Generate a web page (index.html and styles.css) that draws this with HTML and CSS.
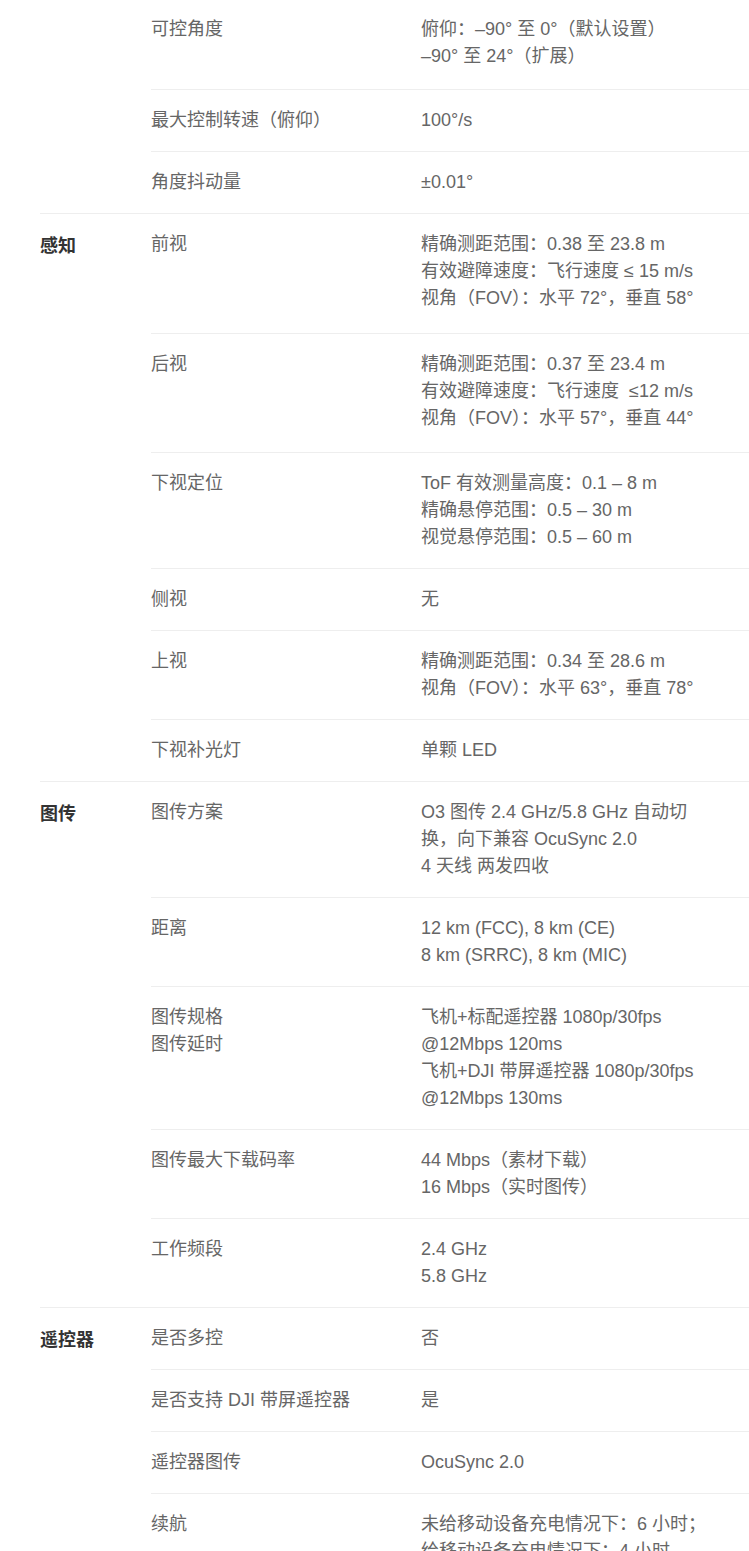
FILE: index.html
```html
<!DOCTYPE html>
<html lang="zh-CN">
<head>
    <meta charset="UTF-8">
    <meta name="viewport" content="width=device-width, initial-scale=1.0">
    <title>规格参数</title>
    <link rel="stylesheet" href="styles.css">
</head>
<body>
    <div class="specs">
        <div class="group first">
            <div class="cat"></div>
            <div class="rows">
                <div class="row pad-19">
                    <div class="label">可控角度</div>
                    <div class="value">俯仰：–90° 至 0°（默认设置）<br>–90° 至 24°（扩展）</div>
                </div>
                <div class="row">
                    <div class="label">最大控制转速（俯仰）</div>
                    <div class="value">100°/s</div>
                </div>
                <div class="row">
                    <div class="label">角度抖动量</div>
                    <div class="value">±0.01°</div>
                </div>
            </div>
        </div>

        <div class="group">
            <div class="cat">感知</div>
            <div class="rows">
                <div class="row pad-21">
                    <div class="label">前视</div>
                    <div class="value">精确测距范围：0.38 至 23.8 m<br>有效避障速度：飞行速度 ≤ 15 m/s<br>视角（FOV）：水平 72°，垂直 58°</div>
                </div>
                <div class="row pad-20">
                    <div class="label">后视</div>
                    <div class="value">精确测距范围：0.37 至 23.4 m<br>有效避障速度：飞行速度 &nbsp;≤12 m/s<br>视角（FOV）：水平 57°，垂直 44°</div>
                </div>
                <div class="row">
                    <div class="label">下视定位</div>
                    <div class="value">ToF 有效测量高度：0.1 – 8 m<br>精确悬停范围：0.5 – 30 m<br>视觉悬停范围：0.5 – 60 m</div>
                </div>
                <div class="row">
                    <div class="label">侧视</div>
                    <div class="value">无</div>
                </div>
                <div class="row">
                    <div class="label">上视</div>
                    <div class="value">精确测距范围：0.34 至 28.6 m<br>视角（FOV）：水平 63°，垂直 78°</div>
                </div>
                <div class="row">
                    <div class="label">下视补光灯</div>
                    <div class="value">单颗 LED</div>
                </div>
            </div>
        </div>

        <div class="group">
            <div class="cat">图传</div>
            <div class="rows">
                <div class="row">
                    <div class="label">图传方案</div>
                    <div class="value">O3 图传 2.4 GHz/5.8 GHz 自动切换，向下兼容 OcuSync 2.0<br>4 天线 两发四收</div>
                </div>
                <div class="row">
                    <div class="label">距离</div>
                    <div class="value">12 km (FCC), 8 km (CE)<br>8 km (SRRC), 8 km (MIC)</div>
                </div>
                <div class="row">
                    <div class="label">图传规格<br>图传延时</div>
                    <div class="value">飞机+标配遥控器 1080p/30fps @12Mbps 120ms<br>飞机+DJI 带屏遥控器 1080p/30fps @12Mbps 130ms</div>
                </div>
                <div class="row">
                    <div class="label">图传最大下载码率</div>
                    <div class="value">44 Mbps（素材下载）<br>16 Mbps（实时图传）</div>
                </div>
                <div class="row">
                    <div class="label">工作频段</div>
                    <div class="value">2.4 GHz<br>5.8 GHz</div>
                </div>
            </div>
        </div>

        <div class="group">
            <div class="cat">遥控器</div>
            <div class="rows">
                <div class="row">
                    <div class="label">是否多控</div>
                    <div class="value">否</div>
                </div>
                <div class="row">
                    <div class="label">是否支持 DJI 带屏遥控器</div>
                    <div class="value">是</div>
                </div>
                <div class="row">
                    <div class="label">遥控器图传</div>
                    <div class="value">OcuSync 2.0</div>
                </div>
                <div class="row">
                    <div class="label">续航</div>
                    <div class="value">未给移动设备充电情况下：6 小时；<br>给移动设备充电情况下：4 小时</div>
                </div>
            </div>
        </div>
    </div>
</body>
</html>
```

FILE: styles.css
```css
body {
    margin: 0;
    background: #fff;
    font-family: "Liberation Sans", "Noto Sans CJK SC", sans-serif;
    font-size: 18px;
    line-height: 27px;
    color: #666;
}
.specs {
    margin-top: -1px;
    padding-left: 40px;
}
.group {
    display: flex;
    border-top: 1px solid #eeeeee;
}
.group.first {
    border-top: none;
}
.cat {
    width: 111px;
    flex-shrink: 0;
    padding-top: 17px;
    font-family: "Noto Sans CJK SC", sans-serif;
    font-weight: 700;
    color: #333;
}
.rows {
    flex: 1;
}
.row {
    display: flex;
    padding: 17px 0;
    border-top: 1px solid #eeeeee;
}
.rows .row:first-child {
    border-top: none;
}
.row.pad-19 {
    padding-bottom: 19px;
}
.row.pad-20 {
    padding-bottom: 20px;
}
.row.pad-21 {
    padding-bottom: 21px;
}
.label {
    width: 270px;
    flex-shrink: 0;
}
.value {
    width: 290px;
}
```
